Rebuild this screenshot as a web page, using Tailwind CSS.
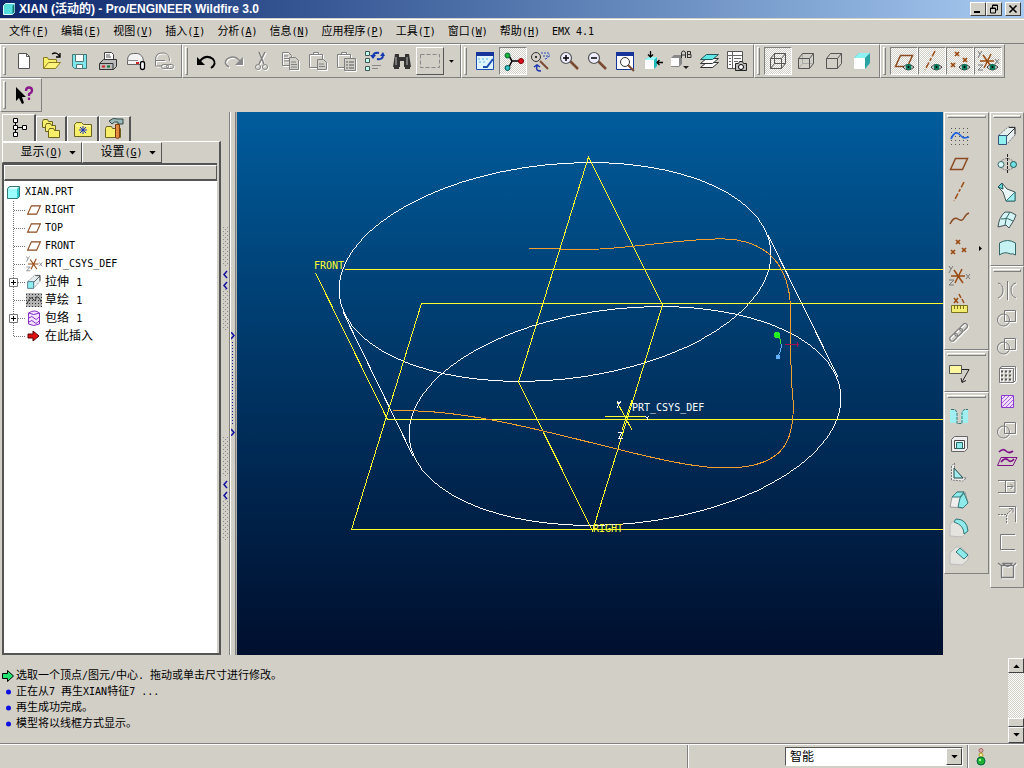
<!DOCTYPE html>
<html lang="zh-CN">
<head>
  <title>XIAN (活动的) - Pro/ENGINEER Wildfire 3.0</title>
  <meta charset="UTF-8">
  <meta name="viewport" content="width=device-width, initial-scale=1.0">
  <!-- Tailwind CSS CDN -->
  <script src="https://cdn.jsdelivr.net/npm/@tailwindcss/browser@4"></script>
</head>
<body class="h-screen flex flex-col overflow-hidden bg-[#d2cfc7] text-black text-[12px] leading-4 font-['DejaVu_Sans_Mono','Noto_Sans_CJK_SC',monospace]">

  <!-- Shared icons -->
  <svg class="hidden">
    <symbol id="i-plane" viewBox="0 0 24 24"><path d="M8.500 6.500h12l-5 11h-12z" fill="none" stroke="#8b4a20" stroke-width="1.500"/></symbol>
    <symbol id="i-csys" viewBox="0 0 24 24">
      <path d="M4 12h14M7 6l9 13M15 5L8 19" fill="none" stroke="#9a4a10" stroke-width="1.500"/>
      <path d="M2 2l2 3 2-3M4 5l-2 4M19 10l4 5M23 10l-4 5M2 16h5l-5 5h5" fill="none" stroke="#777"/>
    </symbol>
    <symbol id="i-points" viewBox="0 0 24 24"><path d="M9 4l4 4M13 4l-4 4M4 14l4 4M8 14l-4 4M15 12l4 4M19 12l-4 4" fill="none" stroke="#9a4a10" stroke-width="1.700"/></symbol>
    <symbol id="i-eye" viewBox="0 0 24 24"><path d="M11 18q5-5 11 0q-6 6-11 0z" fill="#fff" stroke="#333"/><circle cx="16.500" cy="18" r="3" fill="#0c7a5c"/><circle cx="16.500" cy="18" r="1" fill="#000"/></symbol>
    <symbol id="i-extrude" viewBox="0 0 24 24">
      <path d="M4 11L13 3h7v8l-8 9" fill="#e4eeee" stroke="#777" stroke-dasharray="2 1"/><path d="M14 3.500h6v7M11 13l9-9" fill="none" stroke="#333"/>
      <path d="M3.500 11.500h8v9h-8z" fill="#8ff0f0" stroke="#357"/>
    </symbol>
    <symbol id="i-glass" viewBox="0 0 24 24"><path d="M13 12l8 8" stroke="#7a4a30" stroke-width="2.500"/><circle cx="9" cy="9" r="5.500" fill="#eef" stroke="#555" stroke-width="1.200"/></symbol>
    <symbol id="i-boolean" viewBox="0 0 24 24"><path d="M9.500 4.500h11v11h-11z" fill="none" stroke="#777"/><circle cx="8.500" cy="14" r="6" fill="none" stroke="#777"/></symbol>
    <symbol id="i-folder" viewBox="0 0 24 24"><path d="M3.500 7.500l2-2h5l2 2h8v12h-17z" fill="#f7ee6a" stroke="#6b6420"/><path d="M5 9h14" stroke="#fffcc0"/></symbol>
    <symbol id="i-down" viewBox="0 0 8 5"><path d="M0 0h8L4 4.500z" fill="currentColor"/></symbol>
  </svg>

  <!-- Title bar -->
  <header class="h-[18px] shrink-0 flex items-center pl-[3px] pr-[3px] bg-linear-to-r from-[#0d266c] to-[#a6caf0] text-white">
    <svg class="size-3 mr-1" viewBox="0 0 12 12"><path d="M.5 2.500l2-2h9v9l-2 2h-9z" fill="#5dd" stroke="#dff"/><path d="M9.500 3v8l2-2V1z" fill="#177"/></svg>
    <h1 class="flex-1 font-bold font-['Liberation_Sans','Noto_Sans_CJK_SC',sans-serif] text-[12px]">XIAN (活动的) - Pro/ENGINEER Wildfire 3.0</h1>
    <div class="flex">
      <button aria-label="最小化" class="w-4 h-[14px] bg-[#d2cfc7] border border-t-white border-l-white border-r-[#404040] border-b-[#404040] flex items-center justify-center"><svg class="size-2.5" viewBox="0 0 10 10"><path d="M1 8h6" stroke="#000" stroke-width="2"/></svg></button>
      <button aria-label="还原" class="w-4 h-[14px] bg-[#d2cfc7] border border-t-white border-l-white border-r-[#404040] border-b-[#404040] flex items-center justify-center"><svg class="size-2.5" viewBox="0 0 10 10"><path d="M3.500 4V1h5v5H6M1.500 4h5v5h-5zM3 1.500h6M1 4.500h6" fill="none" stroke="#000"/></svg></button>
      <button aria-label="关闭" class="w-4 h-[14px] ml-[3px] bg-[#d2cfc7] border border-t-white border-l-white border-r-[#404040] border-b-[#404040] flex items-center justify-center"><svg class="size-2.5" viewBox="0 0 10 10"><path d="M1.500 1.500l7 7M8.500 1.500l-7 7" stroke="#000" stroke-width="1.600"/></svg></button>
    </div>
  </header>

  <!-- Menu bar -->
  <nav class="h-[25px] shrink-0 flex items-center gap-3 pl-[9px] mt-px border-t border-t-white border-b border-b-[#808080] text-[11px] whitespace-nowrap">
    <button>文件<span class="text-[10px]">(<u>F</u>)</span></button>
    <button>编辑<span class="text-[10px]">(<u>E</u>)</span></button>
    <button>视图<span class="text-[10px]">(<u>V</u>)</span></button>
    <button>插入<span class="text-[10px]">(<u>I</u>)</span></button>
    <button>分析<span class="text-[10px]">(<u>A</u>)</span></button>
    <button>信息<span class="text-[10px]">(<u>N</u>)</span></button>
    <button>应用程序<span class="text-[10px]">(<u>P</u>)</span></button>
    <button>工具<span class="text-[10px]">(<u>T</u>)</span></button>
    <button>窗口<span class="text-[10px]">(<u>W</u>)</span></button>
    <button>帮助<span class="text-[10px]">(<u>H</u>)</span></button>
    <button class="text-[10px]">EMX 4.1</button>
  </nav>

  <!-- Toolbars -->
  <div class="h-[34px] shrink-0 flex">
    <!-- File -->
    <div class="flex items-center border-l border-t border-white border-r border-r-[#808080] border-b border-b-[#808080] pr-[3px]">
      <i class="w-[3px] h-7 ml-[2px] mr-1 border border-white border-r-[#808080] border-b-[#808080]"></i>
      <button aria-label="新建" class="size-7 flex items-center justify-center"><svg class="size-6" viewBox="0 0 24 24"><path d="M6.500 4.500h8l3 3v12h-11z" fill="#fff" stroke="#555"/><path d="M14.500 4.500v3h3" fill="none" stroke="#555"/></svg></button>
      <button aria-label="打开" class="size-7 flex items-center justify-center"><svg class="size-6" viewBox="0 0 24 24"><path d="M3.500 19.500v-11h4l1 2h8v3" fill="#f7ee6a" stroke="#8a7a20"/><path d="M3.500 19.500l5-6h12l-5 6z" fill="#fff27a" stroke="#8a7a20"/><path d="M12 5q5-3 8 3M20 4v4h-4" fill="none" stroke="#000" stroke-width="1.300"/></svg></button>
      <button aria-label="保存" class="size-7 flex items-center justify-center"><svg class="size-6" viewBox="0 0 24 24"><path d="M4.500 5.500h14v14h-12l-2-2z" fill="#7fe8ec" stroke="#477"/><path d="M7.500 5.500h8v7h-8zM8.500 15.500h6v4h-6z" fill="#fff" stroke="#577"/></svg></button>
      <button aria-label="打印" class="size-7 flex items-center justify-center"><svg class="size-6" viewBox="0 0 24 24"><path d="M8.500 11.500v-8h7l2 2v6z" fill="#fff" stroke="#444"/><path d="M10 6h4M10 8h5" stroke="#555"/><path d="M3.500 14.500l4-4h13v7l-3 3h-14z" fill="#bbb" stroke="#333"/><path d="M4 14.500h13v6" fill="none" stroke="#333"/><path d="M6 17.500h3" stroke="#d02020" stroke-width="2"/><path d="M11 17.500h3" stroke="#107030" stroke-width="2"/></svg></button>
      <button aria-label="作为附件发送" class="size-7 flex items-center justify-center"><svg class="size-6" viewBox="0 0 24 24"><path d="M3.500 11.500q0-7 6-7h4q5 1 6 7v4h-16z" fill="#f2f2f2" stroke="#666"/><path d="M4 11.500h10" stroke="#888"/><path d="M12 14h3" stroke="#c22" stroke-width="2"/><rect x="16.500" y="12.500" width="4" height="8" rx="2" fill="#fff" stroke="#000" stroke-width="1.300"/></svg></button>
      <button aria-label="作为链接发送" class="size-7 flex items-center justify-center"><svg class="size-6 drop-shadow-[1px_1px_0_#fff]" viewBox="0 0 24 24"><path d="M10 17H3.500v-6q0-7 6-7h3q5 1 5 8" fill="none" stroke="#808080"/><path d="M4 11.500h9" stroke="#808080"/><rect x="9.500" y="15.500" width="7" height="4" rx="2" fill="none" stroke="#808080"/><rect x="14.500" y="15.500" width="7" height="4" rx="2" fill="none" stroke="#808080"/></svg></button>
    </div>
    <!-- Edit -->
    <div class="flex items-center border-l border-t border-white border-r border-r-[#808080] border-b border-b-[#808080] pr-[2px]">
      <i class="w-[3px] h-7 ml-[2px] mr-1 border border-white border-r-[#808080] border-b-[#808080]"></i>
      <button aria-label="撤消" class="size-7 flex items-center justify-center"><svg class="size-6" viewBox="0 0 24 24"><path d="M6 12q6-7 13-2q4 5-2 9" fill="none" stroke="#000" stroke-width="2"/><path d="M3 8v8h8z" fill="#000"/></svg></button>
      <button aria-label="重做" class="size-7 flex items-center justify-center"><svg class="size-6 drop-shadow-[1px_1px_0_#fff]" viewBox="0 0 24 24"><path d="M18 12q-6-7-13-2q-4 5 2 8" fill="none" stroke="#888" stroke-width="1.500"/><path d="M21 8v8h-8z" fill="#888"/></svg></button>
      <button aria-label="剪切" class="size-7 flex items-center justify-center"><svg class="size-6 drop-shadow-[1px_1px_0_#fff]" viewBox="0 0 24 24"><path d="M9 3l5 12M15 3L9 15" fill="none" stroke="#808080" stroke-width="1.500"/><circle cx="8" cy="18" r="2.500" fill="none" stroke="#808080"/><circle cx="15" cy="18" r="2.500" fill="none" stroke="#808080"/></svg></button>
      <button aria-label="复制" class="size-7 flex items-center justify-center"><svg class="size-6 drop-shadow-[1px_1px_0_#fff]" viewBox="0 0 24 24"><path d="M4.500 3.500h6l3 3v10h-9zM6 7h4M6 9.500h5M6 12h5" fill="none" stroke="#808080"/><path d="M11.500 8.500h6l3 3v9h-9z" fill="#d2cfc7" stroke="#808080"/><path d="M13 13h5M13 15.500h6M13 18h6" stroke="#808080"/></svg></button>
      <button aria-label="粘贴" class="size-7 flex items-center justify-center"><svg class="size-6 drop-shadow-[1px_1px_0_#fff]" viewBox="0 0 24 24"><path d="M3.500 5.500h13v13h-13zM7.500 5.500v-2h5v2" fill="none" stroke="#808080"/><path d="M11.500 10.500h6l3 3v7h-9z" fill="#d2cfc7" stroke="#808080"/><path d="M13 15h5M13 17.500h6" stroke="#808080"/></svg></button>
      <button aria-label="选择性粘贴" class="size-7 flex items-center justify-center"><svg class="size-6 drop-shadow-[1px_1px_0_#fff]" viewBox="0 0 24 24"><path d="M3.500 5.500h13v13h-13zM7.500 5.500v-2h5v2" fill="none" stroke="#808080"/><path d="M10.500 9.500h11v12h-11z" fill="#d2cfc7" stroke="#808080"/><path d="M12 13h2M15 13h5M12 16h2M15 16h5M12 19h2M15 19h5" stroke="#808080" stroke-width="1.500"/></svg></button>
      <button aria-label="再生" class="size-7 flex items-center justify-center"><svg class="size-6" viewBox="0 0 24 24"><path d="M3.500 2.500h4v4h-4zM3.500 9.500h4v4h-4zM3.500 17.500h4v4h-4z" fill="#bfe" stroke="#455"/><path d="M10 16.500h9M10 19.500h6" stroke="#888"/><path d="M11 7q1-4 6-3M21 6q0 5-6 4" fill="none" stroke="#1238b0" stroke-width="2"/><path d="M8 6h6l-3 4zM18 7h5l-2-4z" fill="#1238b0"/></svg></button>
      <button aria-label="查找" class="size-7 flex items-center justify-center"><svg class="size-6" viewBox="0 0 24 24"><path d="M5 5h4v3h6V5h4l2 13h-7v-6h-4v6H3z" fill="#333"/><path d="M6 8v8M17 8v8" stroke="#bbb"/><path d="M4 19h5M15 19h5" stroke="#000" stroke-width="1.500"/></svg></button>
      <button aria-label="选取框" class="size-7 flex items-center justify-center border border-t-white border-l-white border-r-[#555] border-b-[#555]"><svg class="size-6" viewBox="0 0 24 24"><path d="M2.500 5.500h19v13h-19z" fill="none" stroke="#888" stroke-dasharray="4 2"/></svg></button>
      <button aria-label="选取框选项" class="w-[14px] h-7 flex items-center justify-center"><svg class="w-[5px] h-[3px]"><use href="#i-down"/></svg></button>
    </div>
    <!-- View -->
    <div class="flex items-center border-l border-t border-white border-r border-r-[#808080] border-b border-b-[#808080] pr-[2px]">
      <i class="w-[3px] h-7 ml-[2px] mr-1 border border-white border-r-[#808080] border-b-[#808080]"></i>
      <button aria-label="重画" class="size-7 flex items-center justify-center"><svg class="size-6" viewBox="0 0 24 24"><path d="M3.500 3.500h17v17h-17z" fill="#dff4ff" stroke="#1c4fb0"/><path d="M3 3h18v4H3z" fill="#16349a"/><path d="M10 18l4 0 6-8" fill="none" stroke="#1c4fb0" stroke-width="2"/><path d="M5 10h10M6 13h6" stroke="#5ab4e8" stroke-dasharray="2 2"/></svg></button>
      <button aria-label="旋转中心" class="size-7 flex items-center justify-center border border-t-[#808080] border-l-[#808080] border-r-white border-b-white bg-[repeating-conic-gradient(#fff_0_25%,#d2cfc7_0_50%)] bg-[length:2px_2px]"><svg class="size-6" viewBox="0 0 24 24"><path d="M8 7l3 5h9M11 12l-3 6" fill="none" stroke="#000" stroke-width="1.500"/><circle cx="6.500" cy="6.500" r="2.500" fill="#1eb030" stroke="#064"/><circle cx="20" cy="12" r="2.500" fill="#e01020" stroke="#700"/><circle cx="6.500" cy="19" r="2.500" fill="#30c0c0" stroke="#055"/></svg></button>
      <button aria-label="定向模式" class="size-7 flex items-center justify-center"><svg class="size-6" viewBox="0 0 24 24"><circle cx="7" cy="8" r="4.500" fill="none" stroke="#333"/><circle cx="7" cy="8" r="1" fill="#000"/><path d="M11 12l8 8" stroke="#7a4a30" stroke-width="2"/><path d="M12 4h9M14 7h7M16 10q4-1 4-5" fill="none" stroke="#2b4fc0" stroke-dasharray="2 1"/><path d="M12 22q-6 0-4-5M5 18l3-2 3 2" fill="none" stroke="#1a35b0" stroke-width="1.500"/></svg></button>
      <button aria-label="放大" class="size-7 flex items-center justify-center"><svg class="size-6" viewBox="0 0 24 24"><use href="#i-glass"/><path d="M6 9h6M9 6v6" stroke="#000" stroke-width="1.500"/></svg></button>
      <button aria-label="缩小" class="size-7 flex items-center justify-center"><svg class="size-6" viewBox="0 0 24 24"><use href="#i-glass"/><path d="M6 9h6" stroke="#000" stroke-width="1.500"/></svg></button>
      <button aria-label="重新调整" class="size-7 flex items-center justify-center"><svg class="size-6" viewBox="0 0 24 24"><path d="M3.500 3.500h17v17h-17z" fill="#fff" stroke="#16349a"/><path d="M3 3h18v4H3z" fill="#16349a"/><circle cx="12" cy="13" r="4.500" fill="#fff" stroke="#333"/><path d="M15 16l6 6" stroke="#7a4a30" stroke-width="2"/></svg></button>
      <button aria-label="重定向" class="size-7 flex items-center justify-center"><svg class="size-6" viewBox="0 0 24 24"><path d="M4 11l4-3h8v9l-3 3H4z" fill="#2bb" /><path d="M4 11h9v9H4z" fill="#fff"/><path d="M4 11l4-3h8l-3 3z" fill="#9ff"/><path d="M9.500 2v6M7 5.500L9.500 8 12 5.500M22 13.500h-6M18.500 11L16 13.500l2.500 2.500" fill="none" stroke="#000" stroke-width="1.300"/></svg></button>
      <button aria-label="已保存视图" class="size-7 flex items-center justify-center"><svg class="size-6" viewBox="0 0 24 24"><path d="M2 9l3-3h8v9l-3 3H2z" fill="#888"/><path d="M2 9h8v8H2z" fill="#fff"/><path d="M12.500 9V4q0-2 2-2t2 2v5M12.500 6h4M18.500 2v7M18.500 2.500h3v3h-3M19 5.500h3v3h-3" fill="none" stroke="#333"/><path d="M14 17h6l-3 3z" fill="#222"/></svg></button>
      <button aria-label="层" class="size-7 flex items-center justify-center"><svg class="size-6" viewBox="0 0 24 24"><path d="M9.500 13.500h12l-6 5h-12z" fill="#fff" stroke="#333"/><path d="M9.500 9.500h12l-6 5h-12z" fill="#fff" stroke="#333"/><path d="M9.500 5.500h12l-6 5h-12z" fill="#5fe8e8" stroke="#255"/></svg></button>
      <button aria-label="视图管理器" class="size-7 flex items-center justify-center"><svg class="size-6" viewBox="0 0 24 24"><path d="M2.500 2.500h15v17h-15z" fill="#fff" stroke="#555"/><path d="M2 6.500h15M7.500 3v16M9 9.500h7M9 12.500h4M4 9.500h2M4 12.500h2M4 15.500h2" stroke="#666"/><path d="M10.500 14.500h3l1-2h3l1 2h3v7h-11z" fill="#bbb" stroke="#222"/><circle cx="16" cy="18" r="2.500" fill="#fff" stroke="#000"/></svg></button>
    </div>
    <!-- Display style -->
    <div class="flex items-center border-l border-t border-white border-r border-r-[#808080] border-b border-b-[#808080] pr-[3px]">
      <i class="w-[3px] h-7 ml-[2px] mr-1 border border-white border-r-[#808080] border-b-[#808080]"></i>
      <button aria-label="线框" class="size-7 flex items-center justify-center border border-t-[#808080] border-l-[#808080] border-r-white border-b-white bg-[repeating-conic-gradient(#fff_0_25%,#d2cfc7_0_50%)] bg-[length:2px_2px]"><svg class="size-6" viewBox="0 0 24 24"><path d="M4.500 9.500h11v10h-11zM8.500 4.500h11v10h-11zM4.500 9.500l4-5M15.500 9.500l4-5M15.500 19.500l4-5M4.500 19.500l4-5" fill="none" stroke="#555"/></svg></button>
      <button aria-label="隐藏线" class="size-7 flex items-center justify-center"><svg class="size-6" viewBox="0 0 24 24"><path d="M8.500 4.500v10h11M4.500 19.500l4-5" fill="none" stroke="#aaa"/><path d="M4.500 9.500h11v10h-11zM4.500 9.500l4-5h11v10l-4 5M15.500 9.500l4-5" fill="none" stroke="#555"/></svg></button>
      <button aria-label="无隐藏线" class="size-7 flex items-center justify-center"><svg class="size-6" viewBox="0 0 24 24"><path d="M4.500 9.500h11v10h-11zM4.500 9.500l4-5h11v10l-4 5M15.500 9.500l4-5" fill="none" stroke="#555"/></svg></button>
      <button aria-label="着色" class="size-7 flex items-center justify-center"><svg class="size-6" viewBox="0 0 24 24"><path d="M4 9l5-5h11v10l-5 6H4z" fill="#2aa5a5"/><path d="M4 9l5-5h11l-5 5z" fill="#8ff2f2"/><path d="M4 9h11v11H4z" fill="#fff"/></svg></button>
    </div>
    <!-- Datum display -->
    <div class="flex items-center border-l border-t border-white border-r border-r-[#808080] border-b border-b-[#808080] pr-[2px]">
      <i class="w-[3px] h-7 ml-[2px] mr-1 border border-white border-r-[#808080] border-b-[#808080]"></i>
      <button aria-label="基准平面" class="size-7 flex items-center justify-center border border-t-[#808080] border-l-[#808080] border-r-white border-b-white bg-[repeating-conic-gradient(#fff_0_25%,#d2cfc7_0_50%)] bg-[length:2px_2px]"><svg class="size-6" viewBox="0 0 24 24"><use href="#i-plane"/><use href="#i-eye"/></svg></button>
      <button aria-label="基准轴" class="size-7 flex items-center justify-center border border-t-[#808080] border-l-[#808080] border-r-white border-b-white bg-[repeating-conic-gradient(#fff_0_25%,#d2cfc7_0_50%)] bg-[length:2px_2px]"><svg class="size-6" viewBox="0 0 24 24"><path d="M15 2L5 21" stroke="#9a4a10" stroke-width="1.500" stroke-dasharray="6 2 3 2"/><use href="#i-eye"/></svg></button>
      <button aria-label="基准点" class="size-7 flex items-center justify-center border border-t-[#808080] border-l-[#808080] border-r-white border-b-white bg-[repeating-conic-gradient(#fff_0_25%,#d2cfc7_0_50%)] bg-[length:2px_2px]"><svg class="size-6" viewBox="0 0 24 24"><path d="M7 3l4 4M11 3L7 7M3 14l4 4M7 14l-4 4M15 9l4 4M19 9l-4 4" fill="none" stroke="#9a4a10" stroke-width="1.700"/><use href="#i-eye"/></svg></button>
      <button aria-label="坐标系" class="size-7 flex items-center justify-center border border-t-[#808080] border-l-[#808080] border-r-white border-b-white bg-[repeating-conic-gradient(#fff_0_25%,#d2cfc7_0_50%)] bg-[length:2px_2px]"><svg class="size-6" viewBox="0 0 24 24"><use href="#i-csys"/><use href="#i-eye"/></svg></button>
    </div>
  </div>

  <!-- Help toolbar -->
  <div class="h-[34px] shrink-0 flex">
    <div class="w-[42px] flex items-center border-l border-t border-white border-r border-r-[#808080] border-b border-b-[#808080]">
      <i class="w-[3px] h-7 ml-[2px] mr-1 border border-white border-r-[#808080] border-b-[#808080]"></i>
      <button aria-label="上下文相关帮助" class="size-7 flex items-center justify-center"><svg class="size-6" viewBox="0 0 24 24"><path d="M4 4v14l3-3 3 6 2-1-2-6h4z" fill="#000"/><path d="M14 8q0-3.500 3-3.500t3 3q0 2-3 3.500v2M17 14.500v2.500" fill="none" stroke="#8a1a8a" stroke-width="2.300"/></svg></button>
    </div>
  </div>

  <main class="flex-1 min-h-0 flex">
    <!-- Navigator -->
    <aside class="w-[221px] shrink-0 flex flex-col pl-[2px] pt-[2px]">
      <div class="flex items-end">
        <button aria-label="模型树" class="w-[34px] h-[27px] border-t border-l border-white border-r-2 border-r-[#555] flex items-center justify-center"><svg class="size-6" viewBox="0 0 24 24"><path d="M6.500 2.500h4v4h-4zM6.500 9.500h4v4h-4zM6.500 16.500h4v4h-4zM15.500 9.500h4v4h-4z" fill="#fff" stroke="#000"/><path d="M8.500 7v2M8.500 14v2M11 11.500h4" stroke="#000"/></svg></button>
        <button aria-label="文件夹浏览器" class="w-[31px] h-[25px] border-t border-l border-white border-r-2 border-r-[#555] flex items-center justify-center"><svg class="size-6" viewBox="0 0 24 24"><g fill="#f7ee6a" stroke="#6b6420"><path d="M3.500 4.500l1-2h4l1 2h4v6h-10z"/><path d="M6.500 8.500l1-2h4l1 2h4v6h-10z"/><path d="M9.500 13.500l1-2h4l1 2h5v7h-11z"/></g></svg></button>
        <button aria-label="收藏夹" class="w-[32px] h-[25px] border-t border-l border-white border-r-2 border-r-[#555] flex items-center justify-center"><svg class="size-6" viewBox="0 0 24 24"><use href="#i-folder"/><path d="M12 9v8M8 13h8M9 10l6 6M15 10l-6 6" stroke="#1a30c0"/></svg></button>
        <button aria-label="连接" class="w-[32px] h-[25px] border-t border-l border-white border-r-2 border-r-[#555] flex items-center justify-center"><svg class="size-6" viewBox="0 0 24 24"><path d="M2.500 11.500l1-2h5l1 2h8v9h-15z" fill="#f7ee6a" stroke="#6b6420"/><path d="M6 4q4-4 9-2h5v5h-5V5q-4-1-6 2z" fill="#9bb" stroke="#344"/><path d="M12.500 7.500h4v13q-2 2-4 0z" fill="#e08a40" stroke="#7a3a10"/></svg></button>
      </div>
      <div class="flex-1 min-h-0 flex flex-col border-t border-t-white border-r-2 border-r-[#555] border-b-2 border-b-[#555] pr-[2px]">
        <div class="flex">
          <button class="w-20 h-[21px] pl-3 border border-t-white border-l-white border-r-[#555] border-b-[#555] flex items-center justify-center gap-1.5 whitespace-nowrap"><span>显示<span class="text-[10px]">(<u>O</u>)</span></span><svg class="w-[7px] h-1"><use href="#i-down"/></svg></button>
          <button class="w-20 h-[21px] pl-3 border border-t-white border-l-white border-r-[#555] border-b-[#555] flex items-center justify-center gap-1.5 whitespace-nowrap"><span>设置<span class="text-[10px]">(<u>G</u>)</span></span><svg class="w-[7px] h-1"><use href="#i-down"/></svg></button>
        </div>
        <div class="flex-1 min-h-0 bg-white border-t-2 border-l-2 border-[#555]">
          <div class="h-4 bg-[#d2cfc7] border border-[#555] border-l-white border-t-white border-b-2"></div>
          <ul class="pt-[2px] pl-[3px]">
            <li class="h-[18px] flex items-center"><svg class="size-[15px] mr-[3px]" viewBox="0 0 15 15"><path d="M.5 3.500l2-2h10v10l-2 2h-10z" fill="#3cc" stroke="#377"/><path d="M1 4l2-2h9l-2 2z" fill="#dff"/><path d="M1 4h9v9H1z" fill="#9ff"/></svg><span class="text-[10px]">XIAN.PRT</span></li>
            <li class="h-[18px] flex items-center"><svg class="w-[18px] h-[18px]" viewBox="0 0 18 18"><path d="M6.500 0v18M7 9.500h11" fill="none" stroke="#777" stroke-dasharray="1 1"/></svg><svg class="size-[18px] mr-[2px]"><use href="#i-plane"/></svg><span class="text-[10px]">RIGHT</span></li>
            <li class="h-[18px] flex items-center"><svg class="w-[18px] h-[18px]" viewBox="0 0 18 18"><path d="M6.500 0v18M7 9.500h11" fill="none" stroke="#777" stroke-dasharray="1 1"/></svg><svg class="size-[18px] mr-[2px]"><use href="#i-plane"/></svg><span class="text-[10px]">TOP</span></li>
            <li class="h-[18px] flex items-center"><svg class="w-[18px] h-[18px]" viewBox="0 0 18 18"><path d="M6.500 0v18M7 9.500h11" fill="none" stroke="#777" stroke-dasharray="1 1"/></svg><svg class="size-[18px] mr-[2px]"><use href="#i-plane"/></svg><span class="text-[10px]">FRONT</span></li>
            <li class="h-[18px] flex items-center"><svg class="w-[18px] h-[18px]" viewBox="0 0 18 18"><path d="M6.500 0v18M7 9.500h11" fill="none" stroke="#777" stroke-dasharray="1 1"/></svg><svg class="size-[18px] mr-[2px]"><use href="#i-csys"/></svg><span class="text-[10px]">PRT_CSYS_DEF</span></li>
            <li class="h-[18px] flex items-center"><svg class="w-[18px] h-[18px]" viewBox="0 0 18 18"><path d="M6.500 0v18M7 9.500h11" fill="none" stroke="#777" stroke-dasharray="1 1"/><path d="M2.500 5.500h8v8h-8z" fill="#fff" stroke="#777"/><path d="M4 9.500h5M6.500 7v5" stroke="#000"/></svg><svg class="size-[18px] mr-[2px]"><use href="#i-extrude"/></svg><span>拉伸 <span class="text-[10px]">1</span></span></li>
            <li class="h-[18px] flex items-center"><svg class="w-[18px] h-[18px]" viewBox="0 0 18 18"><path d="M6.500 0v18M7 9.500h11" fill="none" stroke="#777" stroke-dasharray="1 1"/></svg><svg class="size-[18px] mr-[2px]" viewBox="0 0 18 18"><path d="M1 2h16v14H1z" fill="#b5b5b5"/><path d="M1 3.500h16M1 6.500h16M1 9.500h16M1 12.500h16M1 15.500h16" stroke="#333" stroke-dasharray="1 2"/><path d="M2 13q3-9 6-5t3-2q3-1 5 5" fill="none" stroke="#333"/></svg><span>草绘 <span class="text-[10px]">1</span></span></li>
            <li class="h-[18px] flex items-center"><svg class="w-[18px] h-[18px]" viewBox="0 0 18 18"><path d="M6.500 0v18M7 9.500h11" fill="none" stroke="#777" stroke-dasharray="1 1"/><path d="M2.500 5.500h8v8h-8z" fill="#fff" stroke="#777"/><path d="M4 9.500h5M6.500 7v5" stroke="#000"/></svg><svg class="size-[18px] mr-[2px]" viewBox="0 0 18 18"><path d="M3.500 4v11q5 3 11 0V4q-5-4-11 0q5 3 11 0" fill="#f3e4ff" stroke="#8a30c8"/><path d="M4 9q3-3 5 0t5-1M4 13q3-3 5 0t5-1" fill="none" stroke="#8a30c8"/></svg><span>包络 <span class="text-[10px]">1</span></span></li>
            <li class="h-[18px] flex items-center"><svg class="w-[18px] h-[18px]" viewBox="0 0 18 18"><path d="M6.500 0v9M7 9.500h11" fill="none" stroke="#777" stroke-dasharray="1 1"/></svg><svg class="size-[18px] mr-[2px]" viewBox="0 0 18 18"><path d="M3 7h5V4l6 5-6 5v-3H3z" fill="#e01010" stroke="#500"/></svg><span>在此插入</span></li>
          </ul>
        </div>
      </div>
    </aside>

    <!-- Splitter -->
    <div class="w-4 shrink-0 flex border-r border-r-[#b0b0a8]">
      <div class="w-[9px] flex flex-col justify-center items-center border-r border-r-[#808080]">
        <svg class="w-[7px] h-[314px]" viewBox="0 0 7 314">
          <g stroke="#888" stroke-dasharray="1 3"><path d="M1.500 0v104M1.500 210v104M5.500 0v104M5.500 210v104M3.500 2v102M3.500 212v102"/></g>
          <path d="M0 40h7v22H0zM0 250h7v22H0z" fill="#d2cfc7"/>
          <path d="M5 44L2 47.500 5 51M5 55L2 58.500 5 62M5 254l-3 3.500 3 3.500M5 265l-3 3.500 3 3.500" fill="none" stroke="#1010a0" stroke-width="1.500"/>
        </svg>
      </div>
      <div class="flex-1 flex flex-col justify-center items-center border-l border-l-white border-r border-r-[#808080]">
        <svg class="w-1 h-[104px]" viewBox="0 0 4 104"><path d="M0 0l3 3.500L0 7M0 97l3 3.500L0 104" fill="none" stroke="#1010a0" stroke-width="1.500"/><path d="M1.500 10v84" stroke="#1010a0" stroke-dasharray="1 2"/></svg>
      </div>
    </div>

    <!-- Graphics window -->
    <section class="flex-1 min-w-0 bg-linear-to-b from-[#005c9c] to-[#000f2e]">
      <svg class="w-full h-full" viewBox="237 112 706 543" preserveAspectRatio="xMinYMin slice" fill="none" shape-rendering="crispEdges">
        <g stroke="#fff">
          <ellipse cx="555" cy="272" rx="217" ry="107.500" transform="rotate(-6.200 555 272)"/>
          <ellipse cx="625" cy="416" rx="217" ry="107.500" transform="rotate(-6.200 625 416)"/>
          <path d="M343 312L413 456M768 235L838 377"/>
        </g>
        <g stroke="#ffff30">
          <path d="M315.500 273L387.500 419.500H943M345 269.500H943"/>
          <path d="M943 303.500H421.500L351.500 529.500H943"/>
          <path d="M588.500 157L518.500 382L592.500 531L662.500 305z"/>
          <path d="M605 416.500h40M617 402l15 28M632 400l-10 30"/>
        </g>
        <path stroke="#f0a030" d="M529 248C560 249 570 250 600 249C650 246 690 238 725 239C760 240 786 258 790 300C791 350 790 370 793 400C795 440 785 468 725 468C650 468 500 406 393 411"/>
        <path stroke="#30e030" d="M777 335q4 4 4 9"/>
        <path stroke="#60b0ff" d="M781 344q1 6-3 12"/>
        <path stroke="#a01050" d="M785 344.500h14M797 342v5"/>
        <circle cx="777" cy="335" r="3" fill="#20f020"/>
        <circle cx="778" cy="357" r="2.500" fill="#60b0ff"/>
        <g stroke="#fff"><path d="M617 401l2 3 2-3M619 404l-2 4M645 416l2 2 2-2M647 418v2M618 432h4l-3 6h4"/></g>
        <g class="text-[10px]">
          <text x="314" y="269" fill="#ffff30">FRONT</text>
          <text x="593" y="532" fill="#ffff30">RIGHT</text>
          <text x="632" y="411" fill="#fff">PRT_CSYS_DEF</text>
        </g>
      </svg>
    </section>

    <!-- Datum and engineering tools -->
    <div class="w-[46px] shrink-0 pl-px">
      <div class="border border-white border-r-[#808080] border-b-[#808080] pt-[2px] pb-[3px]">
        <i class="block h-[3px] mx-[2px] mb-1 border border-white border-r-[#808080] border-b-[#808080]"></i>
        <button aria-label="草绘工具" class="size-7 flex items-center justify-center"><svg class="size-6" viewBox="0 0 24 24"><path d="M4 4.500h18M4 8.500h18M4 12.500h18M4 16.500h18M4 20.500h18" stroke="#555" stroke-dasharray="1 3"/><path d="M4 15q4-9 8-5t5 4 5-1" fill="none" stroke="#1a60e0" stroke-width="1.700"/></svg></button>
        <button aria-label="基准平面工具" class="size-7 flex items-center justify-center"><svg class="size-6"><use href="#i-plane"/></svg></button>
        <button aria-label="基准轴工具" class="size-7 flex items-center justify-center"><svg class="size-6" viewBox="0 0 24 24"><path d="M17 2L7 21" stroke="#9a4a10" stroke-width="1.500" stroke-dasharray="6 2 3 2"/></svg></button>
        <button aria-label="基准曲线" class="size-7 flex items-center justify-center"><svg class="size-6" viewBox="0 0 24 24"><path d="M3 16q4-8 8-5t6-1 5-5" fill="none" stroke="#8b4a20" stroke-width="1.500"/></svg></button>
        <div class="flex">
          <button aria-label="基准点工具" class="size-7 flex items-center justify-center"><svg class="size-6"><use href="#i-points"/></svg></button>
          <button aria-label="更多基准点" class="w-4 h-7 flex items-center justify-center"><svg class="w-[3px] h-[5px]" viewBox="0 0 3 5"><path d="M0 0l3 2.500L0 5z"/></svg></button>
        </div>
        <button aria-label="坐标系工具" class="size-7 flex items-center justify-center"><svg class="size-6"><use href="#i-csys"/></svg></button>
        <button aria-label="分析特征" class="size-7 flex items-center justify-center"><svg class="size-6" viewBox="0 0 24 24"><path d="M7 6l4 5M11 6l-4 5M12 2l2 4M15 7l2 4" stroke="#9a4a10" stroke-width="1.500"/><path d="M4.500 13.500h16v7h-16z" fill="#f2ec70" stroke="#7a7220"/><path d="M7.500 14v3M10.500 14v3M13.500 14v3M16.500 14v3" stroke="#7a7220"/></svg></button>
        <button aria-label="参照" class="size-7 flex items-center justify-center"><svg class="size-6 drop-shadow-[1px_1px_0_#fff]" viewBox="0 0 24 24"><g fill="none" stroke="#808080" stroke-width="1.200" transform="rotate(-45 12 12)"><rect x="0" y="9.500" width="9" height="5" rx="2.500"/><rect x="7" y="9.500" width="9" height="5" rx="2.500"/><rect x="14" y="9.500" width="9" height="5" rx="2.500"/></g></svg></button>
      </div>
      <div class="border border-white border-r-[#808080] border-b-[#808080] pt-[2px] pb-[3px]">
        <i class="block h-[3px] mx-[2px] mb-1 border border-white border-r-[#808080] border-b-[#808080]"></i>
        <button aria-label="注释" class="size-7 flex items-center justify-center"><svg class="size-6" viewBox="0 0 24 24"><path d="M2.500 3.500h12v8h-12z" fill="#fdf7a0" stroke="#555"/><path d="M15 7.500h7L15 20M14 16l1 4.500 4-2" fill="none" stroke="#222"/></svg></button>
      </div>
      <div class="border border-white border-r-[#808080] border-b-[#808080] pt-[2px] pb-[3px]">
        <i class="block h-[3px] mx-[2px] mb-1 border border-white border-r-[#808080] border-b-[#808080]"></i>
        <button aria-label="孔" class="size-7 flex items-center justify-center"><svg class="size-6" viewBox="0 0 24 24"><path d="M3 6h5l2 3v10H3zM21 6h-5l-2 3v10h7z" fill="#a0eef0"/><path d="M4 5.500h4l2 3v11h5v-11l2-3h4" fill="none" stroke="#377" stroke-dasharray="3 1"/></svg></button>
        <button aria-label="壳" class="size-7 flex items-center justify-center"><svg class="size-6" viewBox="0 0 24 24"><path d="M4.500 7.500l3-3h13v12l-3 3h-13z" fill="#eee" stroke="#666"/><path d="M7.500 8.500h10v8h-10z" fill="#fff" stroke="#444"/><path d="M9.500 10.500h6v6h-6z" fill="#8feaec" stroke="#266"/></svg></button>
        <button aria-label="筋" class="size-7 flex items-center justify-center"><svg class="size-6" viewBox="0 0 24 24"><path d="M4.500 20V6l3-3v14l12 1-4 3z" fill="#eee" stroke="#777" stroke-dasharray="2 1"/><path d="M7 8l9 10H7z" fill="#a0eef0" stroke="#244"/></svg></button>
        <button aria-label="拔模" class="size-7 flex items-center justify-center"><svg class="size-6" viewBox="0 0 24 24"><path d="M3 19l2-10 5-5h8l3 11-5 5z" fill="#eee" stroke="#999"/><path d="M11 19l2-9 4-5 4 10-5 5zM5 9l5-5h7l-4 5z" fill="#8feaec" stroke="#377"/></svg></button>
        <button aria-label="倒圆角" class="size-7 flex items-center justify-center"><svg class="size-6" viewBox="0 0 24 24"><path d="M3 20V8l6-5q11 0 12 12l-6 6z" fill="#e5e3de" stroke="#bbb"/><path d="M9 3q11 0 12 12l-4 3q0-9-10-12z" fill="#8feaec" stroke="#377"/></svg></button>
        <button aria-label="倒角" class="size-7 flex items-center justify-center"><svg class="size-6" viewBox="0 0 24 24"><path d="M3 20V9l6-6h5l7 7v6l-6 5z" fill="#e5e3de" stroke="#bbb"/><path d="M9 8l4-4 8 7-4 4z" fill="#8feaec" stroke="#377"/></svg></button>
      </div>
    </div>

    <!-- Feature tools -->
    <div class="w-[35px] shrink-0 pl-px">
      <div class="border border-white border-r-[#808080] border-b-[#808080] pt-[2px] pb-[3px]">
        <i class="block h-[3px] mx-[2px] mb-1 border border-white border-r-[#808080] border-b-[#808080]"></i>
        <div class="flex flex-col items-center">
          <button aria-label="拉伸" class="size-7 flex items-center justify-center"><svg class="size-6"><use href="#i-extrude"/></svg></button>
          <button aria-label="旋转" class="size-7 flex items-center justify-center"><svg class="size-6" viewBox="0 0 24 24"><path d="M5 10q7-7 14 0M5 15q7 6 14 0" fill="none" stroke="#777" stroke-dasharray="2 1"/><path d="M12.500 2v20" stroke="#222" stroke-dasharray="3 1"/><circle cx="6" cy="12.500" r="3" fill="#dff" stroke="#366"/><circle cx="18.500" cy="12.500" r="3" fill="#6fe0e4" stroke="#255"/></svg></button>
          <button aria-label="可变剖面扫描" class="size-7 flex items-center justify-center"><svg class="size-6" viewBox="0 0 24 24"><path d="M7 3l5 6 8 3v9h-9L8 12 3 7z" fill="#e9f6f6" stroke="#455"/><path d="M7 3L3 7l5 2z" fill="#5fe0e4" stroke="#255"/><path d="M11 21l9-9v9z" fill="#a0eef0" stroke="#377"/></svg></button>
          <button aria-label="边界混合" class="size-7 flex items-center justify-center"><svg class="size-6" viewBox="0 0 24 24"><path d="M10 4q6-1 11 3l-2 5-5 8-3-3-8 2q1-10 7-15z" fill="#d4f4f6" stroke="#455"/><path d="M6 11q7-2 12 2M15 4q-5 6-5 13" fill="none" stroke="#366"/></svg></button>
          <button aria-label="造型" class="size-7 flex items-center justify-center"><svg class="size-6" viewBox="0 0 24 24"><path d="M4.500 7q8-5 16 0v12q-3-2-5-1-6-3-11 1z" fill="#c6f2f4" stroke="#366"/></svg></button>
        </div>
      </div>
      <div class="border border-white border-r-[#808080] border-b-[#808080] pt-[2px] pb-[3px]">
        <i class="block h-[3px] mx-[2px] mb-1 border border-white border-r-[#808080] border-b-[#808080]"></i>
        <div class="flex flex-col items-center">
          <button aria-label="镜像" class="size-7 flex items-center justify-center"><svg class="size-6 drop-shadow-[1px_1px_0_#fff]" viewBox="0 0 24 24"><path d="M3 5q5 1 5 7t-5 8M21 5q-5 1-5 7t5 8M12.500 3v19" fill="none" stroke="#777"/></svg></button>
          <button aria-label="合并" class="size-7 flex items-center justify-center"><svg class="size-6 drop-shadow-[1px_1px_0_#fff]"><use href="#i-boolean"/></svg></button>
          <button aria-label="修剪" class="size-7 flex items-center justify-center"><svg class="size-6 drop-shadow-[1px_1px_0_#fff]"><use href="#i-boolean"/></svg></button>
          <button aria-label="阵列" class="size-7 flex items-center justify-center"><svg class="size-6 drop-shadow-[1px_1px_0_#fff]" viewBox="0 0 24 24"><path d="M4.500 6.500l2-2h14v14l-2 2h-14zM4.500 6.500h14v14" fill="none" stroke="#777"/><path d="M6 9.500h12M6 13.500h12M6 17.500h12" stroke="#555" stroke-width="2" stroke-dasharray="2 2"/></svg></button>
          <button aria-label="填充" class="size-7 flex items-center justify-center"><svg class="size-6" viewBox="0 0 24 24"><path d="M6.500 5.500h12v12h-12z" fill="#f0dcff" stroke="#8a3ad0"/><path d="M7 9l3-3M7 13l7-7M7 17L18 6M11 17l7-7M15 17l3-3" stroke="#a860e0"/></svg></button>
          <button aria-label="相交" class="size-7 flex items-center justify-center"><svg class="size-6 drop-shadow-[1px_1px_0_#fff]"><use href="#i-boolean"/></svg></button>
          <button aria-label="包络" class="size-7 flex items-center justify-center"><svg class="size-6" viewBox="0 0 24 24"><path d="M4 6q4-4 7-1t7 0M6 16q4-5 7-2t6-1" fill="none" stroke="#80108a" stroke-width="1.700"/><path d="M6 11.500h16l-4 8H2.500z" fill="none" stroke="#80108a"/></svg></button>
          <button aria-label="延伸" class="size-7 flex items-center justify-center"><svg class="size-6 drop-shadow-[1px_1px_0_#fff]" viewBox="0 0 24 24"><path d="M3 6.500h17v12H3M10.500 6.500v12M12 12.500h6M15.500 10l2.500 2.500-2.500 2.500" fill="none" stroke="#777"/></svg></button>
          <button aria-label="偏移" class="size-7 flex items-center justify-center"><svg class="size-6 drop-shadow-[1px_1px_0_#fff]" viewBox="0 0 24 24"><path d="M4 4.500h16.500V20" fill="none" stroke="#777"/><path d="M3 12.500h8.500V21M12 12l6-6" fill="none" stroke="#777" stroke-dasharray="2 1"/><path d="M14 6.500h4v4" fill="none" stroke="#777"/></svg></button>
          <button aria-label="加厚" class="size-7 flex items-center justify-center"><svg class="size-6 drop-shadow-[1px_1px_0_#fff]" viewBox="0 0 24 24"><path d="M20 4.500H5.500v15H20" fill="none" stroke="#777"/></svg></button>
          <button aria-label="实体化" class="size-7 flex items-center justify-center"><svg class="size-6 drop-shadow-[1px_1px_0_#fff]" viewBox="0 0 24 24"><path d="M6.500 7.500h12v12h-12zM3 5l4 3M21 5l-3 3M8 5.500q5 6 9 0z" fill="none" stroke="#777" stroke-width="1.300"/></svg></button>
        </div>
      </div>
    </div>
  </main>

  <!-- Messages -->
  <div class="h-[89px] shrink-0 flex border-b border-b-[#808080]">
    <ul class="flex-1 pt-[13px] pl-[2px] text-[11px] whitespace-nowrap">
      <li class="h-4 flex items-center"><svg class="size-3 mr-[2px]" viewBox="0 0 12 12"><path d="M.5 3.500h5v-3l6 5.500-6 5.500v-3h-5z" fill="#20e070" stroke="#000"/></svg><span>选取一个顶点<span class="text-[10px]">/</span>图元<span class="text-[10px]">/</span>中心<span class="text-[10px]">. </span>拖动或单击尺寸进行修改。</span></li>
      <li class="h-4 flex items-center"><svg class="size-3 mr-[2px]" viewBox="0 0 12 12"><circle cx="6.500" cy="6" r="2.500" fill="#1010e0"/></svg><span>正在从<span class="text-[10px]">7 </span>再生<span class="text-[10px]">XIAN</span>特征<span class="text-[10px]">7 ...</span></span></li>
      <li class="h-4 flex items-center"><svg class="size-3 mr-[2px]" viewBox="0 0 12 12"><circle cx="6.500" cy="6" r="2.500" fill="#1010e0"/></svg>再生成功完成。</li>
      <li class="h-4 flex items-center"><svg class="size-3 mr-[2px]" viewBox="0 0 12 12"><circle cx="6.500" cy="6" r="2.500" fill="#1010e0"/></svg>模型将以线框方式显示。</li>
    </ul>
    <div class="w-4 flex flex-col mt-[3px] bg-[repeating-conic-gradient(#fff_0_25%,#d2cfc7_0_50%)] bg-[length:2px_2px]">
      <button aria-label="向上滚动" class="h-[15px] flex items-center justify-center bg-[#d2cfc7] border border-t-white border-l-white border-r-[#404040] border-b-[#404040]"><svg class="w-[7px] h-1 rotate-180"><use href="#i-down"/></svg></button>
      <div class="flex-1"></div>
      <div class="h-[9px] bg-[#d2cfc7] border border-t-white border-l-white border-r-[#404040] border-b-[#404040]"></div>
      <button aria-label="向下滚动" class="h-4 flex items-center justify-center bg-[#d2cfc7] border border-t-white border-l-white border-r-[#404040] border-b-[#404040]"><svg class="w-[7px] h-1"><use href="#i-down"/></svg></button>
    </div>
  </div>

  <!-- Status bar -->
  <footer class="h-6 shrink-0 flex items-stretch border-t border-t-white">
    <div class="flex-1 border-r border-r-[#808080]"></div>
    <div class="w-[280px] flex items-center justify-end pr-1 border-l border-l-white border-r border-r-[#808080]">
      <div class="relative w-[178px] h-[19px] border border-t-[#555] border-l-[#555] border-r-white border-b-white bg-white">
        <select id="filter" aria-label="过滤器" class="w-full h-full appearance-none pl-1 pr-5 leading-4 bg-white">
          <option>智能</option>
        </select>
        <span class="absolute right-0 top-0 w-4 h-full flex items-center justify-center bg-[#d2cfc7] border border-t-white border-l-white border-r-[#404040] border-b-[#404040] pointer-events-none"><svg class="w-[7px] h-1"><use href="#i-down"/></svg></span>
      </div>
    </div>
    <div class="w-14 pl-1.5 flex items-center border-l border-l-white">
      <svg class="w-3 h-[18px]" viewBox="0 0 12 18"><circle cx="6" cy="2.500" r="2" fill="#d8b0a8" stroke="#a66"/><circle cx="6" cy="7" r="2" fill="#f8f0a0" stroke="#a92"/><circle cx="6" cy="13" r="4" fill="#20b030" stroke="#064"/><circle cx="5" cy="12" r="1.200" fill="#9f9"/></svg>
    </div>
  </footer>

</body>
</html>
